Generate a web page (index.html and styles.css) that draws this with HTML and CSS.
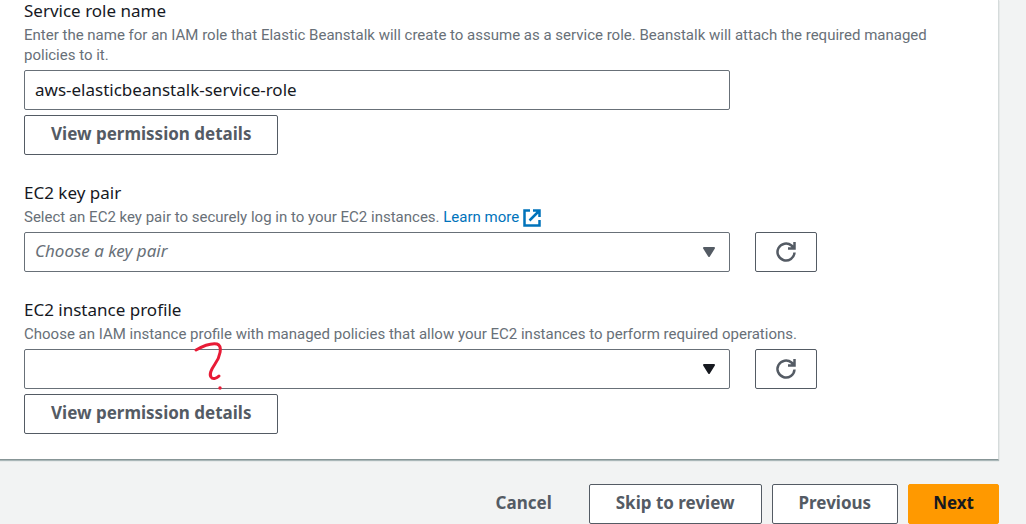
FILE: index.html
```html
<!DOCTYPE html>
<html lang="en">
<head>
<meta charset="utf-8">
<meta name="viewport" content="width=device-width, initial-scale=1">
<title>Configure service access</title>
<link rel="stylesheet" href="styles.css">
</head>
<body>
<form class="page">
  <section class="card">
    <div class="field">
      <label class="label" for="role">Service role name</label>
      <p class="hint">Enter the name for an IAM role that Elastic Beanstalk will create to assume as a service role. Beanstalk will attach the required managed policies to it.</p>
      <div class="row"><input class="control" id="role" type="text" value="aws-elasticbeanstalk-service-role"></div>
      <button class="btn btn-details" type="button">View permission details</button>
    </div>

    <div class="field">
      <label class="label" for="keypair">EC2 key pair</label>
      <p class="hint">Select an EC2 key pair to securely log in to your EC2 instances. <a class="link" href="#">Learn more
        <svg class="external" viewBox="0 0 18 18" aria-hidden="true"><path d="M7 1.500H1.500v15h15V11M10 1.500h6.500V8M16 2 6.500 11.500"/></svg></a></p>
      <div class="row">
        <div class="select">
          <select class="control placeholder" id="keypair"><option>Choose a key pair</option></select>
          <svg class="caret" viewBox="0 0 14 12" aria-hidden="true"><path d="M2 2h10L7 10z"/></svg>
        </div>
        <button class="btn btn-icon" type="button" aria-label="Refresh key pairs">
          <svg class="refresh" viewBox="0 0 22 22" aria-hidden="true"><path d="M19.500 11.500a8.500 8.500 0 1 1-3-7L19 7M19.500 1v6.500H13"/></svg>
        </button>
      </div>
    </div>

    <div class="field">
      <label class="label" for="profile">EC2 instance profile</label>
      <p class="hint">Choose an IAM instance profile with managed policies that allow your EC2 instances to perform required operations.</p>
      <div class="row">
        <div class="select">
          <select class="control" id="profile"><option></option></select>
          <svg class="caret caret-dark" viewBox="0 0 14 12" aria-hidden="true"><path d="M2 2h10L7 10z"/></svg>
          <svg class="scribble" viewBox="0 0 36 52" aria-hidden="true"><path d="M5 10C12 6 20 3 26 4C32 6 29 17 24 24C20 30 18 34 20 37C22 40 26 38 28 36"/><circle cx="29" cy="48" r="1.700"/></svg>
        </div>
        <button class="btn btn-icon" type="button" aria-label="Refresh instance profiles">
          <svg class="refresh" viewBox="0 0 22 22" aria-hidden="true"><path d="M19.500 11.500a8.500 8.500 0 1 1-3-7L19 7M19.500 1v6.500H13"/></svg>
        </button>
      </div>
      <button class="btn btn-details" type="button">View permission details</button>
    </div>
  </section>

  <footer class="actions">
    <button class="btn btn-plain" type="button">Cancel</button>
    <button class="btn" type="button">Skip to review</button>
    <button class="btn" type="button">Previous</button>
    <button class="btn btn-primary" type="submit">Next</button>
  </footer>
</form>
</body>
</html>
```
FILE: styles.css
```css
* { box-sizing: border-box; }

body {
  margin: 0;
  background: #f2f3f3;
  color: #16191f;
  font-family: "Noto Sans", "Open Sans", sans-serif;
  font-size: 17px;
  line-height: 22px;
}

.page { padding-right: 27px; }

.card {
  display: flex;
  flex-direction: column;
  gap: 27px;
  padding: 0 24px 25px;
  background: #fff;
  border-right: 1px solid #d5dbdb;
  border-bottom: 1px solid #879596;
  box-shadow: 0 1px 1px #aab7b8;
}

.label { display: block; }

.hint {
  margin: 3px 0 5px;
  color: #687078;
  font-family: Roboto, "Noto Sans", sans-serif;
  font-size: 15px;
  line-height: 20px;
}

.link { color: #0073bb; text-decoration: none; white-space: nowrap; }

.external {
  width: 18px;
  height: 18px;
  vertical-align: middle;
  fill: none;
  stroke: currentColor;
  stroke-width: 2.5;
}

.row {
  display: grid;
  grid-template-columns: minmax(0, 706px) 62px;
  gap: 25px;
}

.select { position: relative; }

.control {
  display: block;
  width: 100%;
  height: 40px;
  padding: 0 10px 2px;
  border: 1px solid #687078;
  border-radius: 2px;
  background: #fff;
  color: #16191f;
  font: inherit;
  appearance: none;
}

.placeholder { color: #687078; font-style: italic; }

.caret {
  position: absolute;
  top: 14px;
  right: 14px;
  width: 14px;
  height: 12px;
  fill: #545b64;
  stroke: #545b64;
  stroke-width: 2;
  stroke-linejoin: round;
  pointer-events: none;
}

.caret-dark { fill: #16191f; stroke: #16191f; }

.scribble {
  position: absolute;
  top: -9px;
  left: 167px;
  width: 36px;
  height: 52px;
  fill: none;
  stroke: #e81b36;
  stroke-width: 3;
  stroke-linecap: round;
  stroke-linejoin: round;
  pointer-events: none;
}

.scribble circle { fill: #e81b36; stroke: none; }

.btn {
  height: 40px;
  padding: 0 26px 2px;
  border: 1px solid #545b64;
  border-radius: 2px;
  background: #fff;
  color: #545b64;
  font: inherit;
  font-weight: 700;
  white-space: nowrap;
}

.btn-details { display: block; margin-top: 5px; }

.btn-icon {
  display: grid;
  place-items: center;
  padding: 0;
}

.refresh {
  width: 22px;
  height: 22px;
  fill: none;
  stroke: currentColor;
  stroke-width: 2.5;
}

.actions {
  display: flex;
  justify-content: flex-end;
  gap: 10px;
  padding-top: 24px;
}

.btn-plain { border-color: transparent; background: transparent; }

.btn-primary {
  padding: 0 24px 2px;
  border-color: #f90;
  background: #f90;
  color: #16191f;
}
```
